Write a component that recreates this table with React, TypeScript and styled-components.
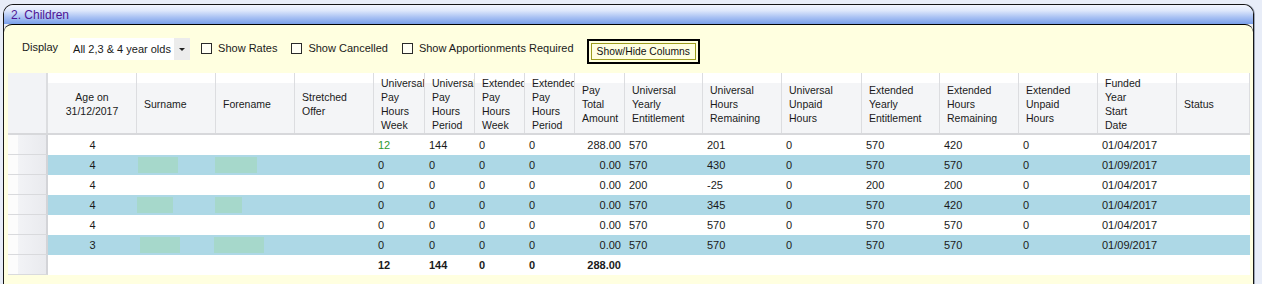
import styled, { createGlobalStyle } from "styled-components";

const GlobalStyle = createGlobalStyle`
  html, body {
    margin: 0;
    padding: 0;
    background: #e8edf8;
  }
  body {
    font-family: "Liberation Sans", Arial, sans-serif;
    color: #1a1a1a;
  }
  * {
    box-sizing: border-box;
  }
`;

const widths = [40, 89, 79, 79, 79, 51, 50, 50, 50, 50, 78, 79, 80, 78, 79, 79, 79, 73];
const template = widths.map((w) => `${w}px`).join(" ");

type Align = "left" | "center" | "right";

const columns: { label: string[]; align: Align }[] = [
  { label: ["Age on", "31/12/2017"], align: "center" },
  { label: ["Surname"], align: "left" },
  { label: ["Forename"], align: "left" },
  { label: ["Stretched", "Offer"], align: "left" },
  { label: ["Universal", "Pay", "Hours", "Week"], align: "left" },
  { label: ["Universal", "Pay", "Hours", "Period"], align: "left" },
  { label: ["Extended", "Pay", "Hours", "Week"], align: "left" },
  { label: ["Extended", "Pay", "Hours", "Period"], align: "left" },
  { label: ["Pay", "Total", "Amount"], align: "right" },
  { label: ["Universal", "Yearly", "Entitlement"], align: "left" },
  { label: ["Universal", "Hours", "Remaining"], align: "left" },
  { label: ["Universal", "Unpaid", "Hours"], align: "left" },
  { label: ["Extended", "Yearly", "Entitlement"], align: "left" },
  { label: ["Extended", "Hours", "Remaining"], align: "left" },
  { label: ["Extended", "Unpaid", "Hours"], align: "left" },
  { label: ["Funded", "Year", "Start", "Date"], align: "left" },
  { label: ["Status"], align: "left" },
];

// surname / forename are blurred out in the screenshot: [surnameW, surnameX, forenameW, forenameX]
type Child = { values: string[]; blur?: [number, number, number, number] };

const children: Child[] = [
  { values: ["4", "", "", "", "12", "144", "0", "0", "288.00", "570", "201", "0", "570", "420", "0", "01/04/2017", ""] },
  {
    values: ["4", "", "", "", "0", "0", "0", "0", "0.00", "570", "430", "0", "570", "570", "0", "01/09/2017", ""],
    blur: [40, 1, 42, -1],
  },
  { values: ["4", "", "", "", "0", "0", "0", "0", "0.00", "200", "-25", "0", "200", "200", "0", "01/04/2017", ""] },
  {
    values: ["4", "", "", "", "0", "0", "0", "0", "0.00", "570", "345", "0", "570", "420", "0", "01/04/2017", ""],
    blur: [36, 0, 27, -1],
  },
  { values: ["4", "", "", "", "0", "0", "0", "0", "0.00", "570", "570", "0", "570", "570", "0", "01/04/2017", ""] },
  {
    values: ["3", "", "", "", "0", "0", "0", "0", "0.00", "570", "570", "0", "570", "570", "0", "01/09/2017", ""],
    blur: [40, 3, 50, -2],
  },
];

const totals = ["", "", "", "", "12", "144", "0", "0", "288.00", "", "", "", "", "", "", "", ""];

const Panel = styled.section`
  width: 1251px;
  margin: 4px 0 0 3px;
  border: 1px solid #161616;
  border-bottom: none;
  border-radius: 10px 10px 0 0;
  background: #eceef3;
  box-shadow: 1px 0 0 #9aa3b5;
  overflow: hidden;
`;

const TitleBar = styled.header`
  height: 19px;
  padding-left: 7px;
  display: flex;
  align-items: center;
  font-size: 12px;
  color: #4f1495;
  background: linear-gradient(to bottom, #f3f6fe 0%, #dde7fb 30%, #a8c1f3 65%, #7a9fe9 100%);
`;

const Body = styled.div`
  background: #ffffe0;
  border-top: 1px solid #000;
  border-radius: 8px 8px 0 0;
  padding: 0 3px 20px 4px;
`;

const Toolbar = styled.div`
  height: 48px;
  padding: 13px 0 0 14px;
  display: flex;
  align-items: flex-start;
  font-size: 11px;
`;

const Label = styled.span`
  margin-top: 2px;
  line-height: 14px;
`;

const Select = styled.div`
  margin-left: 12px;
  width: 120px;
  height: 22px;
  display: flex;
  background: #fff;
`;

const SelectValue = styled.span`
  flex: 1;
  padding-left: 3px;
  line-height: 22px;
  white-space: nowrap;
  overflow: hidden;
`;

const SelectArrow = styled.span`
  width: 16px;
  background: #ececec;
  display: flex;
  align-items: center;
  justify-content: center;

  &::after {
    content: "";
    border-left: 3px solid transparent;
    border-right: 3px solid transparent;
    border-top: 3px solid #222;
  }
`;

const CheckList = styled.div`
  display: flex;
  gap: 14px;
  margin: 3px 0 0 11px;
`;

const CheckOption = styled.label`
  display: flex;
  align-items: center;
  gap: 6px;
  line-height: 14px;
`;

const Box = styled.span`
  width: 11px;
  height: 11px;
  border: 1px solid #2a2a2a;
  background: #fffff4;
`;

const ColumnsButton = styled.button`
  margin: 5px 0 0 17px;
  height: 17px;
  padding: 0 5px;
  font-family: inherit;
  font-size: 10.3px;
  line-height: 15px;
  color: #111;
  background: transparent;
  border: 1px solid #9c9c1c;
  outline: 2px solid #000;
  outline-offset: 2px;
`;

const Grid = styled.div`
  width: 1242px;
  background: #fff;
  font-size: 11px;
`;

const HeadRow = styled.div`
  display: grid;
  grid-template-columns: ${template};
  height: 62px;
  border-bottom: 2px solid #d7d8db;
  font-size: 10.5px;
  line-height: 14px;
`;

const Corner = styled.div`
  background: #f2f3f6;
  border-right: 2px solid #dcdde0;
`;

const HeadCell = styled.div<{ $center: boolean }>`
  display: flex;
  flex-direction: column;
  justify-content: center;
  align-items: ${(p) => (p.$center ? "center" : "flex-start")};
  padding: 2px 0 0 ${(p) => (p.$center ? 0 : 7)}px;
  overflow: hidden;
  white-space: nowrap;
  background: linear-gradient(to bottom, #fff 0 10px, #f4f5f7 10px);
  border-right: 1px solid #dcdde0;
`;

const Row = styled.div<{ $alt?: boolean; $total?: boolean }>`
  display: grid;
  grid-template-columns: ${template};
  height: 20px;
  background: ${(p) => (p.$alt ? "#add8e6" : "#fff")};
  font-weight: ${(p) => (p.$total ? "bold" : "normal")};
`;

const RowHead = styled.div`
  background: linear-gradient(to right, #fcfcfc 0 10px, #f2f3f6 10px, #e9eaee 38px);
  border-right: 2px solid #d3d4d8;
  border-bottom: 1px solid #d9dadd;
`;

const Cell = styled.div<{ $align: Align; $green?: boolean }>`
  padding: 0 4px;
  line-height: 20px;
  overflow: hidden;
  white-space: nowrap;
  text-align: ${(p) => p.$align};
  color: ${(p) => (p.$green ? "#2f9a2f" : "#1a1a1a")};
`;

const BlurCell = styled.div`
  display: flex;
  align-items: center;
`;

const Blob = styled.span<{ $w: number; $x: number }>`
  width: ${(p) => p.$w}px;
  height: 16px;
  margin-left: ${(p) => p.$x}px;
  background: #a6d8cb;
  filter: blur(0.5px);
`;

function DataRow({ child, index }: { child: Child; index: number }) {
  return (
    <Row $alt={index % 2 === 1}>
      <RowHead />
      {child.values.map((v, i) => {
        if (child.blur && (i === 1 || i === 2)) {
          const [sw, sx, fw, fx] = child.blur;
          return (
            <BlurCell key={i}>
              <Blob $w={i === 1 ? sw : fw} $x={i === 1 ? sx : fx} />
            </BlurCell>
          );
        }
        return (
          <Cell key={i} $align={columns[i].align} $green={index === 0 && i === 4}>
            {v}
          </Cell>
        );
      })}
    </Row>
  );
}

export default function App() {
  return (
    <>
      <GlobalStyle />
      <Panel>
        <TitleBar>2. Children</TitleBar>
        <Body>
          <Toolbar>
            <Label>Display</Label>
            <Select>
              <SelectValue>All 2,3 &amp; 4 year olds</SelectValue>
              <SelectArrow />
            </Select>
            <CheckList>
              <CheckOption>
                <Box />
                Show Rates
              </CheckOption>
              <CheckOption>
                <Box />
                Show Cancelled
              </CheckOption>
              <CheckOption>
                <Box />
                Show Apportionments Required
              </CheckOption>
            </CheckList>
            <ColumnsButton>Show/Hide Columns</ColumnsButton>
          </Toolbar>
          <Grid>
            <HeadRow>
              <Corner />
              {columns.map((c, i) => (
                <HeadCell key={i} $center={c.align === "center"}>
                  {c.label.map((line) => (
                    <span key={line}>{line}</span>
                  ))}
                </HeadCell>
              ))}
            </HeadRow>
            {children.map((child, i) => (
              <DataRow key={i} child={child} index={i} />
            ))}
            <Row $total>
              <RowHead />
              {totals.map((v, i) => (
                <Cell key={i} $align={columns[i].align}>
                  {v}
                </Cell>
              ))}
            </Row>
          </Grid>
        </Body>
      </Panel>
    </>
  );
}
